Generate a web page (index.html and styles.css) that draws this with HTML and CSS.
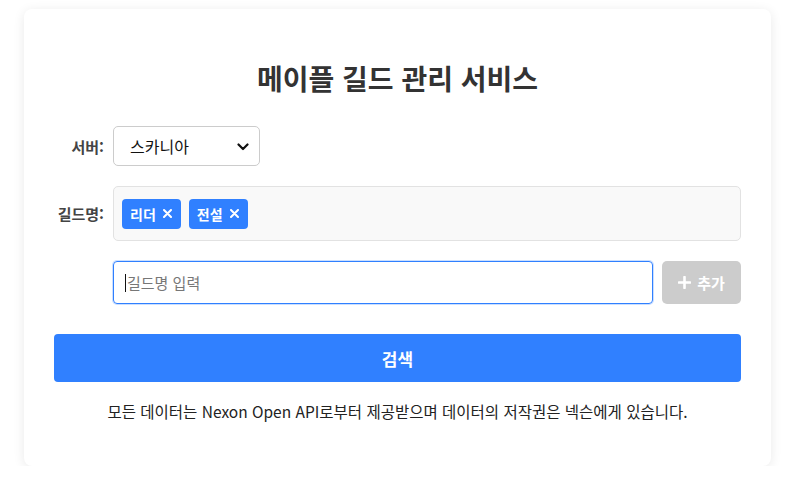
FILE: index.html
```html
<!DOCTYPE html>
<html lang="ko">
<head>
<meta charset="utf-8">
<title>메이플 길드 관리 서비스</title>
<link rel="stylesheet" href="styles.css">
</head>
<body>
<div class="card">
  <h1 class="title">메이플 길드 관리 서비스</h1>
  <div class="row row-server">
    <label class="label">서버:</label>
    <div class="select">
      <span class="select-text">스카니아</span>
      <svg class="chev" width="12" height="8" viewBox="0 0 12 8"><path d="M1.5 1.5 L6 6 L10.5 1.5" fill="none" stroke="#111" stroke-width="2.2" stroke-linecap="round" stroke-linejoin="round"/></svg>
    </div>
  </div>
  <div class="row row-guild">
    <label class="label">길드명:</label>
    <div class="tagbox">
      <span class="tag">리더 <svg class="x" width="9" height="9" viewBox="0 0 9 9"><path d="M1 1 L8 8 M8 1 L1 8" stroke="#fff" stroke-width="2" stroke-linecap="round"/></svg></span>
      <span class="tag">전설 <svg class="x" width="9" height="9" viewBox="0 0 9 9"><path d="M1 1 L8 8 M8 1 L1 8" stroke="#fff" stroke-width="2" stroke-linecap="round"/></svg></span>
    </div>
  </div>
  <div class="row row-input">
    <div class="input"><span class="caret"></span><span class="placeholder">길드명 입력</span></div>
    <button class="add"><svg width="13" height="13" viewBox="0 0 13 13"><path d="M6.5 1 V12 M1 6.5 H12" stroke="#fff" stroke-width="2.6" stroke-linecap="round"/></svg>추가</button>
  </div>
  <button class="search">검색</button>
  <p class="footer">모든 데이터는 Nexon Open API로부터 제공받으며 데이터의 저작권은 넥슨에게 있습니다.</p>
</div>
</body>
</html>
```
FILE: styles.css
```css
* { box-sizing: border-box; }
html, body { margin: 0; background: #fff; }
body {
  font-family: "Noto Sans CJK KR", "Noto Sans", sans-serif;
  color: #222;
  padding: 9px 29px 0 24px;
}
.card {
  width: 747px;
  height: 457px;
  background: #fff;
  border-radius: 8px;
  box-shadow: 0 2px 12px rgba(0,0,0,0.09);
  padding: 49px 30px 0 30px;
  display: flex;
  flex-direction: column;
}
.title {
  margin: 0;
  font-size: 28px;
  line-height: 40px;
  font-weight: 700;
  color: #333;
  text-align: center;
}
.row { display: flex; align-items: center; }
.row-server { margin-top: 28px; }
.row-guild { margin-top: 20px; }
.row-input { margin-top: 20px; padding-left: 59px; gap: 9px; }
.label {
  width: 50px;
  margin-right: 9px;
  text-align: right;
  font-size: 15px;
  font-weight: 700;
  color: #444;
  white-space: nowrap;
}
.select {
  width: 147px;
  height: 40px;
  border: 1px solid #ccc;
  border-radius: 5px;
  background: #fff;
  display: flex;
  align-items: center;
  justify-content: space-between;
  padding: 0 10px 0 16px;
  font-size: 16px;
  color: #111;
}
.chev { margin-top: 1px; }
.tagbox {
  flex: 1;
  height: 55px;
  border: 1px solid #e2e2e2;
  border-radius: 5px;
  background: #f9f9f9;
  padding: 12px 8px;
  display: flex;
  gap: 8px;
  align-items: center;
}
.tag {
  height: 30px;
  background: #3080ff;
  color: #fff;
  border-radius: 4px;
  padding: 0 9px 0 8px;
  font-size: 14px;
  font-weight: 700;
  display: inline-flex;
  align-items: center;
  gap: 7px;
}
.input {
  width: 540px;
  height: 43px;
  border: 1px solid #3080ff;
  border-radius: 4px;
  box-shadow: 0 0 0 1px rgba(48,128,255,0.25);
  display: flex;
  align-items: center;
  padding-left: 11px;
  font-size: 15px;
}
.caret { width: 1px; height: 18px; background: #111; margin-right: 1px; }
.placeholder { color: #777; }
.add {
  width: 79px;
  height: 43px;
  border: 0;
  border-radius: 5px;
  background: #cccccc;
  color: #fff;
  font-family: inherit;
  font-size: 15px;
  font-weight: 700;
  display: flex;
  align-items: center;
  justify-content: center;
  gap: 6px;
  padding: 0;
}
.search {
  margin-top: 30px;
  width: 687px;
  height: 48px;
  border: 0;
  border-radius: 4px;
  background: #3080ff;
  color: #fff;
  font-family: inherit;
  font-size: 17px;
  font-weight: 700;
}
.footer {
  margin: 18px 0 0 0;
  text-align: center;
  font-size: 15.5px;
  line-height: 22px;
  color: #222;
}
```
